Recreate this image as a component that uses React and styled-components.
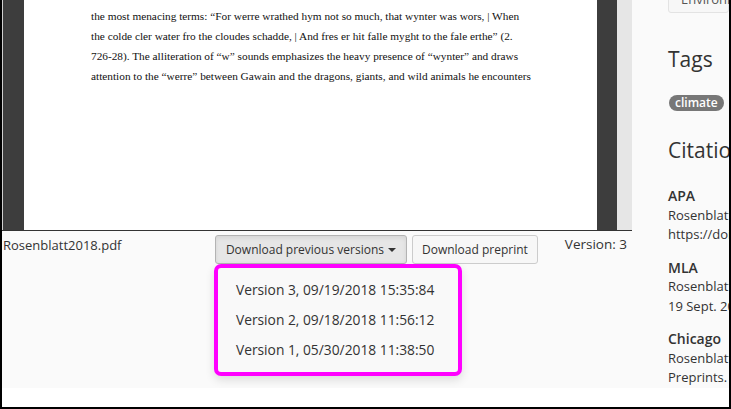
import React from 'react';
import styled, { createGlobalStyle } from 'styled-components';

const GlobalStyle = createGlobalStyle`
    html, body {
        margin: 0;
        padding: 0;
        background: #fff;
    }
    * {
        box-sizing: border-box;
    }
`;

const StyledFrame = styled.div`
    width: 731px;
    height: 409px;
    border: 2px solid #000;
    border-top: none;
    background: #fff;
    overflow: hidden;
    font-family: "Open Sans", "Noto Sans", sans-serif;
    color: #333;
`;
const StyledContent = styled.div`
    height: 388px;
    display: flex;
    background: #fafafa;
`;
const StyledMainColumn = styled.div`
    width: 630px;
    flex-shrink: 0;
    display: flex;
    flex-direction: column;
    position: relative;
`;
const StyledViewer = styled.div`
    height: 231px;
    display: flex;
    border-bottom: 1px solid #333;
`;
const StyledGutter = styled.div`
    width: ${props => props.$width}px;
    flex-shrink: 0;
    background: ${props => props.$color};
    border-left: ${props => props.$edge ? '1px solid #cfcfcf' : 'none'};
`;
const StyledPage = styled.div`
    flex: 1;
    background: #fff;
    padding: 6px 0 0 67px;
    font-family: "Liberation Serif", "Times New Roman", serif;
    font-size: 11.3px;
    line-height: 20px;
    color: #111;
    white-space: nowrap;
    overflow: hidden;
`;
const StyledFileBar = styled.div`
    display: flex;
    align-items: flex-start;
    padding: 4px 5px 0 1px;
    font-size: 13px;
`;
const StyledFileName = styled.div`
    flex: 1;
    padding-top: 1px;
    font-size: 13px;
`;
const StyledBtnGroup = styled.div`
    display: flex;
    gap: 5px;
    position: relative;
`;
const StyledBtn = styled.button`
    font-family: "Open Sans", "Noto Sans", sans-serif;
    font-size: 12px;
    color: #333;
    height: 29px;
    padding: 0 ${props => props.$active ? 10 : 9}px;
    border: 1px solid ${props => props.$active ? '#b3b3b3' : '#cccccc'};
    border-radius: 3px;
    background: ${props => props.$active ? '#e6e6e6' : '#f7f7f7'};
    box-shadow: ${props => props.$active ? 'inset 0 2px 4px rgba(0,0,0,0.08)' : 'none'};
    display: flex;
    align-items: center;
    gap: 4px;
`;
const StyledCaret = styled.span`
    display: inline-block;
    width: 0;
    height: 0;
    border-top: 4px solid #333;
    border-left: 4px solid transparent;
    border-right: 4px solid transparent;
`;
const StyledVersion = styled.div`
    margin-left: 27px;
    font-size: 13.5px;
`;
const StyledMenu = styled.div`
    position: absolute;
    top: 29px;
    left: -1px;
    width: 248px;
    border: 4px solid #ff00ff;
    border-radius: 7px;
    background: #f9f9f9;
    padding: 7px 0;
    box-shadow: 0 4px 10px rgba(0,0,0,0.12);
`;
const StyledMenuItem = styled.div`
    height: 30px;
    line-height: 30px;
    padding-left: 18px;
    font-size: 13.8px;
    color: #333;
    white-space: nowrap;
`;
const StyledSidebar = styled.div`
    flex: 1;
    padding-left: 36px;
    overflow: hidden;
    white-space: nowrap;
`;
const StyledFieldBox = styled.div`
    margin-top: -20px;
    height: 33px;
    border: 1px solid #e3e3e3;
    border-radius: 3px;
    background: #f7f7f7;
    padding: 9px 0 0 12px;
    font-size: 13px;
    color: #555;
`;
const StyledHeading = styled.div`
    font-size: 21px;
    line-height: 26px;
    color: #333;
    margin-top: ${props => props.$top}px;
`;
const StyledTag = styled.span`
    display: inline-block;
    margin-top: 23px;
    margin-left: 1px;
    height: 16px;
    line-height: 16px;
    padding: 0 6px;
    border-radius: 9px;
    background: #777;
    color: #fff;
    font-size: 12px;
    font-weight: 600;
`;
const StyledCitation = styled.div`
    margin-top: ${props => props.$top}px;
    font-size: 13px;
    line-height: 19.5px;
`;
const StyledCitationLabel = styled.div`
    font-size: 14px;
    font-weight: 600;
`;

const pageLines = [
    'the most menacing terms: \u201cFor werre wrathed hym not so much, that wynter was wors, | When',
    'the colde cler water fro the cloudes schadde, | And fres er hit falle myght to the fale erthe\u201d (2.',
    '726-28). The alliteration of \u201cw\u201d sounds emphasizes the heavy presence of \u201cwynter\u201d and draws',
    'attention to the \u201cwerre\u201d between Gawain and the dragons, giants, and wild animals he encounters',
];

const versions = [
    'Version 3, 09/19/2018 15:35:84',
    'Version 2, 09/18/2018 11:56:12',
    'Version 1, 05/30/2018 11:38:50',
];

const citations = [
    { label: 'APA', lines: ['Rosenblatt, A.', 'https://doi.org'], top: 23 },
    { label: 'MLA', lines: ['Rosenblatt, A.', '19 Sept. 2018'], top: 13 },
    { label: 'Chicago', lines: ['Rosenblatt, A.', 'Preprints.'], top: 13 },
];

const App = () => {
    return (
        <StyledFrame>
            <GlobalStyle />
            <StyledContent>
                <StyledMainColumn>
                    <StyledViewer>
                        <StyledGutter $width={22} $color="#3d3d3d" $edge />
                        <StyledPage>
                            {pageLines.map(line => <div key={line}>{line}</div>)}
                        </StyledPage>
                        <StyledGutter $width={20} $color="#3d3d3d" />
                        <StyledGutter $width={15} $color="#e6e6e6" />
                    </StyledViewer>
                    <StyledFileBar>
                        <StyledFileName>Rosenblatt2018.pdf</StyledFileName>
                        <StyledBtnGroup>
                            <StyledBtn $active>
                                Download previous versions <StyledCaret />
                            </StyledBtn>
                            <StyledBtn>Download preprint</StyledBtn>
                            <StyledMenu>
                                {versions.map(v => <StyledMenuItem key={v}>{v}</StyledMenuItem>)}
                            </StyledMenu>
                        </StyledBtnGroup>
                        <StyledVersion>Version: 3</StyledVersion>
                    </StyledFileBar>
                </StyledMainColumn>
                <StyledSidebar>
                    <StyledFieldBox>Environment</StyledFieldBox>
                    <StyledHeading $top={33}>Tags</StyledHeading>
                    <StyledTag>climate</StyledTag>
                    <StyledHeading $top={25}>Citations</StyledHeading>
                    {citations.map(c => (
                        <StyledCitation key={c.label} $top={c.top}>
                            <StyledCitationLabel>{c.label}</StyledCitationLabel>
                            {c.lines.map(l => <div key={l}>{l}</div>)}
                        </StyledCitation>
                    ))}
                </StyledSidebar>
            </StyledContent>
        </StyledFrame>
    );
};

export default App;
